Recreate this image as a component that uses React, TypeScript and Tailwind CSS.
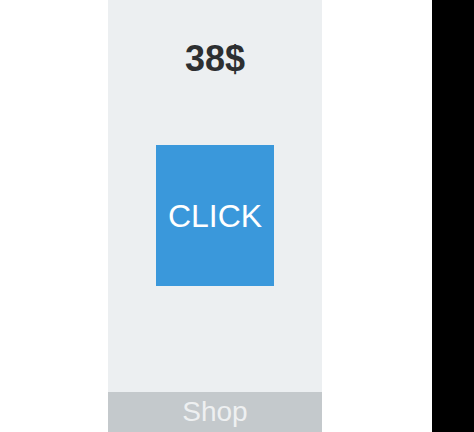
export default function App() {
  return (
    <div className="flex h-[432px] w-[474px] bg-white font-['Liberation_Sans',Arial,sans-serif]">
      <div className="w-[108px]" />
      <div className="flex w-[214px] flex-col bg-[#eceff1]">
        <p className="pt-[41px] text-center text-[36px] font-bold leading-none text-[#2d2f31]">38$</p>
        <button className="mx-auto mt-[68px] flex h-[141px] w-[118px] items-center justify-center bg-[#3a98db] text-[32px] text-white">
          CLICK
        </button>
        <div className="flex-1" />
        <div className="flex h-[40px] items-center justify-center bg-[#c4c9cc] text-[28px] leading-none text-[#eef0f1]">
          Shop
        </div>
      </div>
      <div className="flex-1" />
      <div className="w-[42px] bg-black" />
    </div>
  );
}
